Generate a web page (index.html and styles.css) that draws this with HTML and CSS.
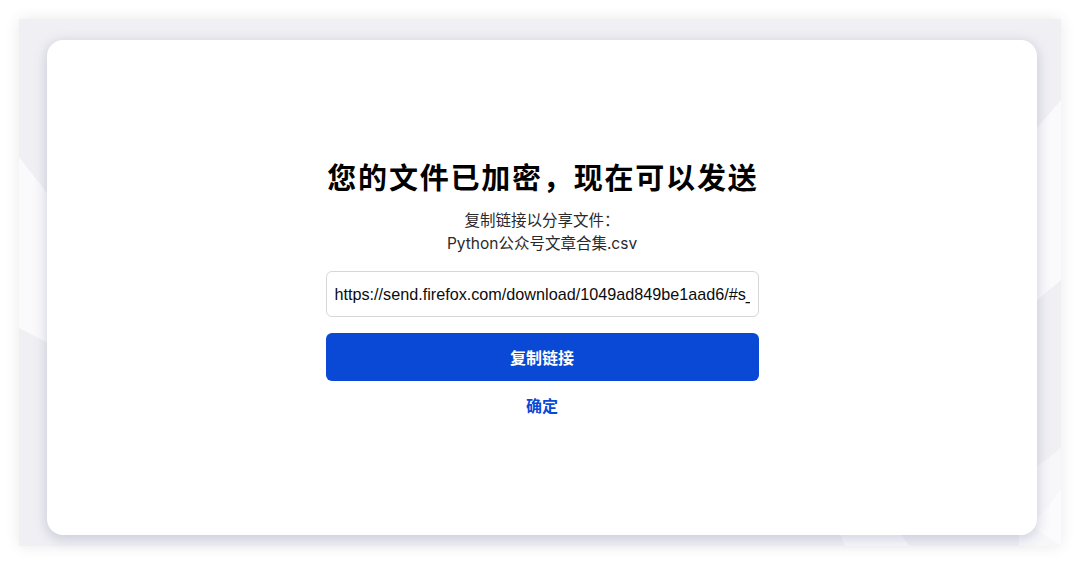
FILE: index.html
```html
<!DOCTYPE html>
<html lang="zh-CN">
<head>
<meta charset="utf-8">
<title>Firefox Send</title>
<link rel="stylesheet" href="styles.css">
</head>
<body>
<div class="panel">
  <svg class="deco" viewBox="0 0 1042 527" preserveAspectRatio="none" aria-hidden="true">
    <polygon points="0,138 60,215 60,340 0,309" fill="#fafafc"/>
    <polygon points="1042,81 980,153 980,313 1042,261" fill="#fafafc"/>
    <path d="M1042,428 C1030,440 1015,450 1000,455 L1000,527 L1042,527 Z" fill="#f7f7fa"/>
    <path d="M1042,470 C1035,480 1025,495 1010,505 L1042,527 Z" fill="#fbfbfd"/>
    <polygon points="820,512 880,512 890,527 826,527" fill="#f8f8fb"/>
  </svg>
  <main class="card">
    <div class="content">
      <h1 class="title">您的文件已加密，现在可以发送</h1>
      <p class="subtitle">复制链接以分享文件：<br>Python公众号文章合集.csv</p>
      <input class="link-input" type="text" readonly value="https://send.firefox.com/download/1049ad849be1aad6/#s_qL7v2kX9pRzN3aF">
      <button class="copy-btn" type="button">复制链接</button>
      <a class="ok-link" href="#">确定</a>
    </div>
  </main>
</div>
</body>
</html>
```

FILE: styles.css
```css
html, body {
  margin: 0;
  padding: 0;
  background: #ffffff;
}

body {
  padding: 19px;
  height: 565px;
  box-sizing: border-box;
  font-family: Inter, "Noto Sans CJK SC", "Noto Sans", sans-serif;
  color: #0c0c0d;
}

.panel {
  position: relative;
  height: 527px;
  background: #f0f0f4;
  box-shadow: 0 0 14px rgba(0, 0, 0, 0.09);
  padding: 21px 24px 11px 28px;
  box-sizing: border-box;
  display: flex;
}

.deco {
  position: absolute;
  left: 0;
  top: 0;
  width: 100%;
  height: 100%;
}

.card {
  position: relative;
  flex: 1;
  background: #ffffff;
  border-radius: 16px;
  box-shadow: 0 3px 12px 2px rgba(50, 50, 110, 0.17);
  display: flex;
  align-items: center;
  justify-content: center;
}

.content {
  width: 433px;
  display: flex;
  flex-direction: column;
  align-items: center;
  text-align: center;
}

.title {
  margin: 0;
  font-family: "Noto Sans CJK SC", sans-serif;
  font-size: 29px;
  line-height: 38px;
  font-weight: 700;
  letter-spacing: 1.8px;
  margin-right: -1.8px;
  color: #000000;
  white-space: nowrap;
}

.subtitle {
  margin: 14px 0 0;
  font-size: 15.5px;
  line-height: 23px;
  color: #2a2a2e;
}

.link-input {
  margin-top: 16px;
  width: 100%;
  height: 46px;
  box-sizing: border-box;
  border: 1px solid #d7d7db;
  border-radius: 6px;
  padding: 0 8px;
  font-family: "Liberation Sans", Arial, sans-serif;
  font-size: 16.2px;
  color: #0c0c0d;
  background: #ffffff;
  outline: none;
}

.copy-btn {
  margin-top: 16px;
  width: 100%;
  height: 48px;
  border: none;
  border-radius: 6px;
  background: #0a48d6;
  color: #ffffff;
  font-family: Inter, "Noto Sans CJK SC", sans-serif;
  font-size: 16px;
  font-weight: 700;
  cursor: pointer;
}

.ok-link {
  margin-top: 13px;
  font-size: 16px;
  line-height: 24px;
  font-weight: 700;
  color: #0a48d6;
  text-decoration: none;
}
```
